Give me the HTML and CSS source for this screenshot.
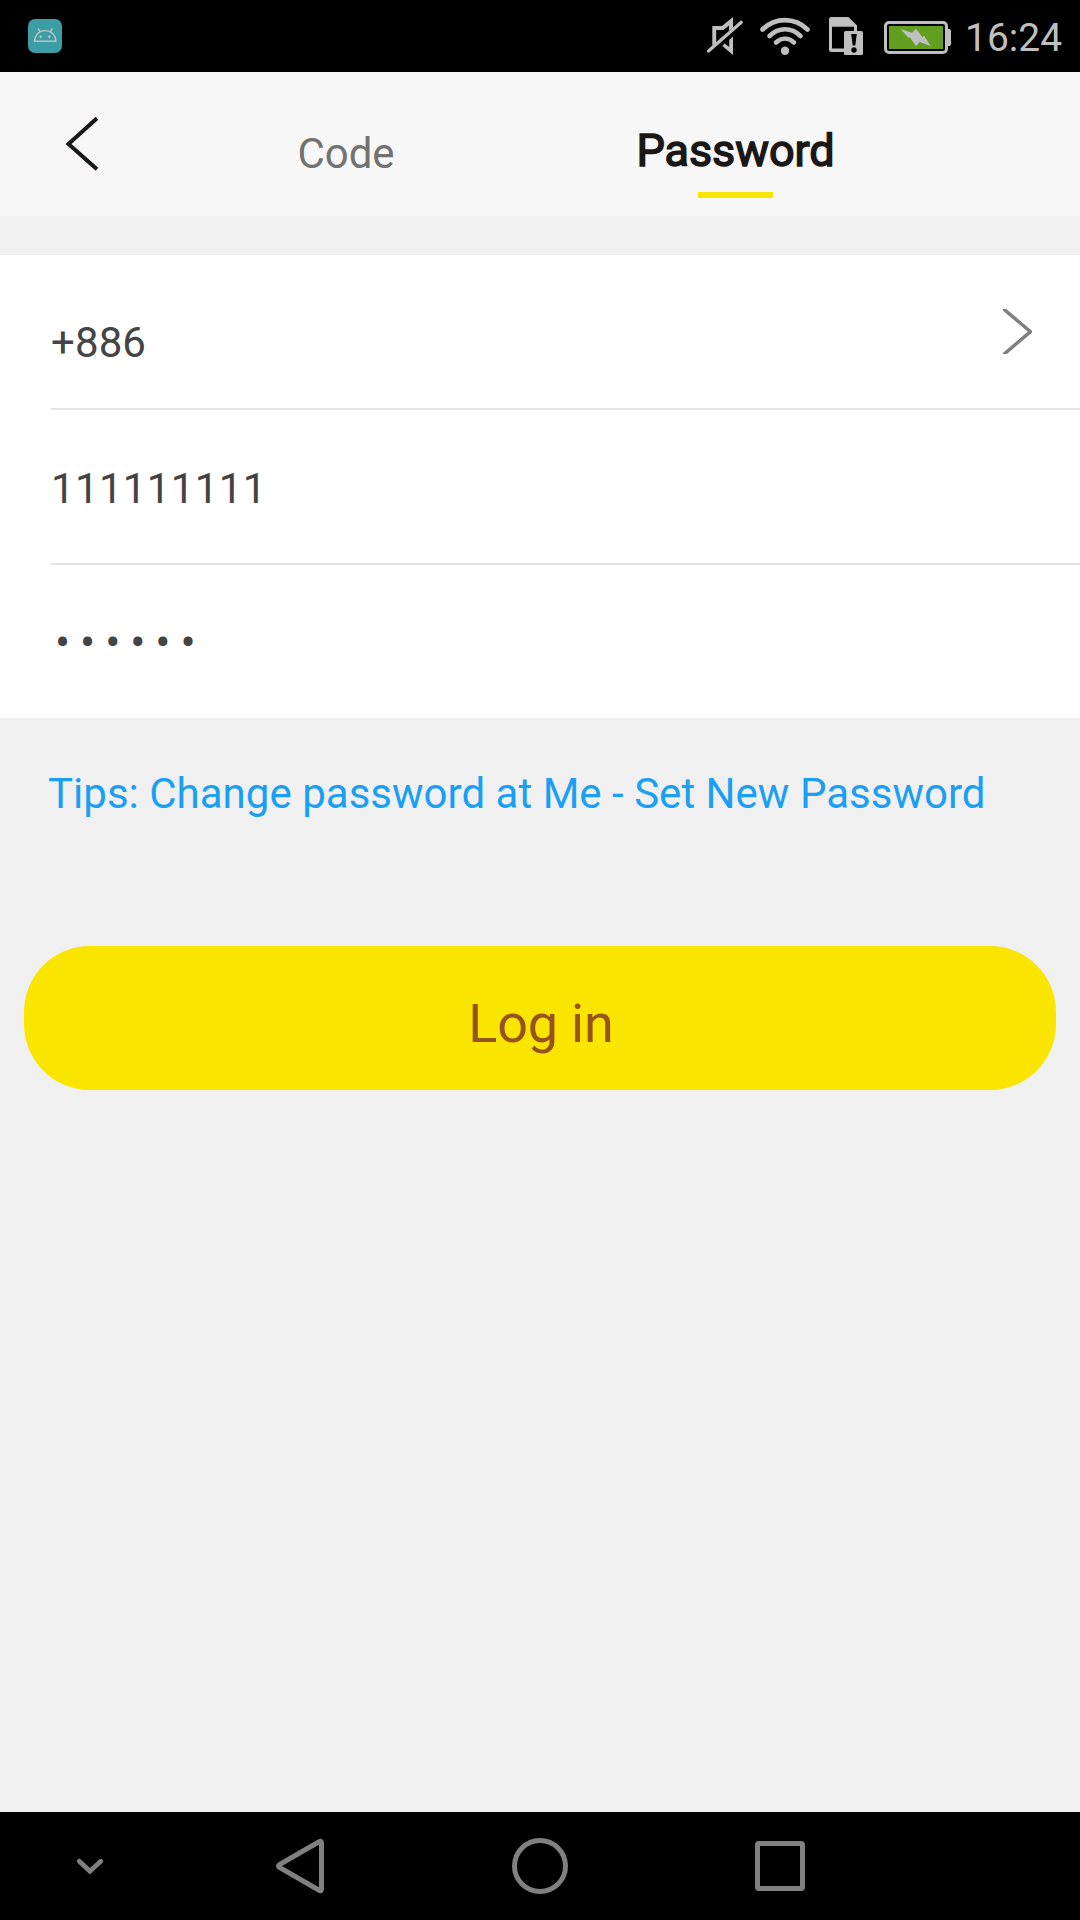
FILE: index.html
```html
<!DOCTYPE html>
<html lang="en">
<head>
<meta charset="utf-8">
<title>Log in</title>
<link rel="stylesheet" href="styles.css">
</head>
<body>
<div class="screen">
  <header class="status">
    <svg class="app-icon" width="34" height="34" viewBox="0 0 34 34">
      <rect width="34" height="34" rx="7" fill="#3b9da5"/>
      <g fill="none" stroke="#c0c0c0" stroke-width="1.4">
        <path d="M6.500 22.300C7 16 11 11.600 17.200 11.600S27.500 16 28 22.300Z"/>
        <path d="M10 9.500l2 3M24.500 9.500l-2 3"/>
      </g>
      <path d="M12.700 16l1.600 1.700-1.600 1.700-1.600-1.700zM21.300 16l1.600 1.700-1.600 1.700-1.600-1.700z" fill="#c0c0c0"/>
    </svg>
    <div class="status-icons">
      <svg class="mute" width="40" height="40" viewBox="0 0 40 40">
        <path d="M7.300 29V9H17L28 0V10.500L24 14V8.500L18.500 13H11.200V25.500ZM28 19.500V38L17.300 29L19.700 26.500L24.200 30V23Z" fill="#bfbfbf"/>
        <path d="M3.500 34L36.300 5.200" stroke="#bfbfbf" stroke-width="3.200" stroke-linecap="round"/>
      </svg>
      <svg class="wifi" width="50" height="38" viewBox="0 0 50 38">
        <g fill="none" stroke="#bfbfbf" stroke-width="4.600" stroke-linecap="round">
          <path d="M2.500 12.500C15 0 35 0 47.500 12.500"/>
          <path d="M9.500 19C18.500 10 31.500 10 40.500 19"/>
          <path d="M16 25.500C21.500 20.500 28.500 20.500 34 25.500"/>
        </g>
        <circle cx="25" cy="33.800" r="4.200" fill="#bfbfbf"/>
      </svg>
      <svg class="sim" width="34" height="38" viewBox="0 0 34 38">
        <path d="M2.500 0H19.500L28 8.500V14H25V9.700H3V31.500H15V35H2.500Q0 35 0 32.500V2.500Q0 0 2.500 0Z" fill="#bfbfbf"/>
        <rect x="15" y="14" width="19" height="24" rx="1.500" fill="#bfbfbf"/>
        <path d="M22.200 17H27.800L26.300 28.500H23.700Z"/>
        <circle cx="25" cy="33" r="2.700"/>
      </svg>
      <svg class="battery" width="67" height="33" viewBox="0 0 67 33">
        <rect x="1.500" y="1.500" width="61" height="30" rx="3.500" fill="none" stroke="#bfbfbf" stroke-width="3"/>
        <path d="M64 8H65.500Q67 8 67 9.500V23Q67 25 65.500 25H64Z" fill="#bfbfbf"/>
        <rect x="5" y="5" width="54" height="23" fill="#629f20"/>
        <path d="M16.500 8L28 11.800L32 7.800L38.300 16L40 14.700L47 25L35.500 21L32 25.200L26 16.200L24.500 16.800Z" fill="#bfbfbf"/>
      </svg>
    </div>
    <span class="clock">16:24</span>
  </header>

  <nav class="tabs">
    <a class="back"><svg width="34" height="58" viewBox="0 0 34 58"><path d="M32 3.300L3.500 29L32 54.300" fill="none" stroke="#1a1716" stroke-width="4"/></svg></a>
    <a class="tab">Code</a>
    <a class="tab active">Password</a>
  </nav>

  <main>
    <section class="form">
      <div class="row country"><span>+886</span>
        <svg class="chevron" width="29" height="45" viewBox="0 0 29 45"><path d="M0 -.500L27.500 22.700L0 46" fill="none" stroke="#808080" stroke-width="3.500"/></svg>
      </div>
      <div class="row phone">111111111</div>
      <div class="row secret">••••••</div>
    </section>
    <p class="tips">Tips: Change password at Me - Set New Password</p>
    <button class="login">Log in</button>
  </main>

  <footer class="navbar">
    <svg class="nav-hide" width="28" height="18" viewBox="0 0 28 18"><path d="M3.300 3.300L14 13.300L24.700 3.300" fill="none" stroke="#808080" stroke-width="4.800" stroke-linecap="round"/></svg>
    <svg class="nav-back" width="50" height="56" viewBox="0 0 50 56"><path d="M44.500 3.500Q46.500 2.500 46.500 5V51Q46.500 53.500 44.500 52.500L4.500 29.500Q2.500 28 4.500 26.500Z" fill="none" stroke="#808080" stroke-width="5"/></svg>
    <svg class="nav-home" width="56" height="56" viewBox="0 0 56 56"><circle cx="28" cy="28" r="25.500" fill="none" stroke="#808080" stroke-width="5"/></svg>
    <svg class="nav-recent" width="50" height="50" viewBox="0 0 50 50"><path fill-rule="evenodd" d="M4 0H46Q50 0 50 4V46Q50 50 46 50H4Q0 50 0 46V4Q0 0 4 0ZM5 5V45H45V5Z" fill="#808080"/></svg>
  </footer>
</div>
</body>
</html>
```
FILE: styles.css
```css
* { box-sizing: border-box; }
body { margin: 0; font-family: Roboto, "Liberation Sans", sans-serif; }
svg { display: block; flex: none; }

.screen {
  width: 1080px;
  height: 1920px;
  display: flex;
  flex-direction: column;
  background: #f0f0f0;
  overflow: hidden;
}

.status {
  height: 72px;
  display: flex;
  align-items: flex-start;
  background: #000;
  color: #bfbfbf;
}
.app-icon { margin: 19px 0 0 28px; }
.status-icons { display: flex; margin-left: 643px; }
.mute { margin-top: 17px; }
.wifi { margin: 17px 0 0 15px; }
.sim { margin: 17px 0 0 19px; }
.battery { margin: 21px 0 0 21px; }
.clock { margin-left: 14px; font-size: 39px; line-height: 76px; }

.tabs {
  height: 144px;
  display: flex;
  background: #f7f7f7;
}
.back { width: 165px; padding: 43px 0 0 65px; }
.tab {
  width: 360px;
  padding-left: 2px;
  text-align: center;
  font-size: 42px;
  line-height: 163px;
  color: #727272;
}
.tab.active {
  width: 420px;
  padding: 0;
  font-size: 45px;
  line-height: 157px;
  color: #1a1716;
  text-indent: 1px;
  letter-spacing: -0.1px;
  -webkit-text-stroke: 1.5px #1a1716;
}
.tab.active::after {
  content: "";
  display: block;
  width: 75px;
  height: 6px;
  margin: -37px auto 0;
  background: #fae500;
}

.form {
  margin-top: 39px;
  padding-left: 51px;
  background: #fff;
  color: #444;
  font-size: 42px;
}
.row { height: 155px; border-bottom: 2px solid #e5e5e5; letter-spacing: 0.4px; }
.country { display: flex; justify-content: space-between; line-height: 175px; letter-spacing: 0.1px; }
.chevron { margin: 54px 48px 0 0; }
.phone { line-height: 157px; letter-spacing: 0.35px; }
.secret {
  height: 153px;
  border-bottom: 0;
  line-height: 156px;
  font-size: 45px;
  letter-spacing: 9.9px;
  padding-left: 4px;
}

.tips {
  margin: 0;
  padding: 50px 0 0 48px;
  height: 228px;
  font-size: 42px;
  line-height: 51px;
  letter-spacing: 0.02px;
  color: #1a9ff2;
}
.login {
  display: block;
  width: 1032px;
  height: 144px;
  margin: 0 auto;
  padding: 11px 0 0 2px;
  border: 0;
  border-radius: 66px;
  background: #fae500;
  color: #94541c;
  font: 54px/133px Roboto, "Liberation Sans", sans-serif;
  letter-spacing: -0.2px;
}

.navbar {
  height: 108px;
  margin-top: auto;
  display: flex;
  align-items: center;
  background: #000;
}
.nav-hide { margin: 2px 0 0 76px; }
.nav-back { margin-left: 171px; }
.nav-home { margin-left: 187px; }
.nav-recent { margin-left: 187px; }
```
